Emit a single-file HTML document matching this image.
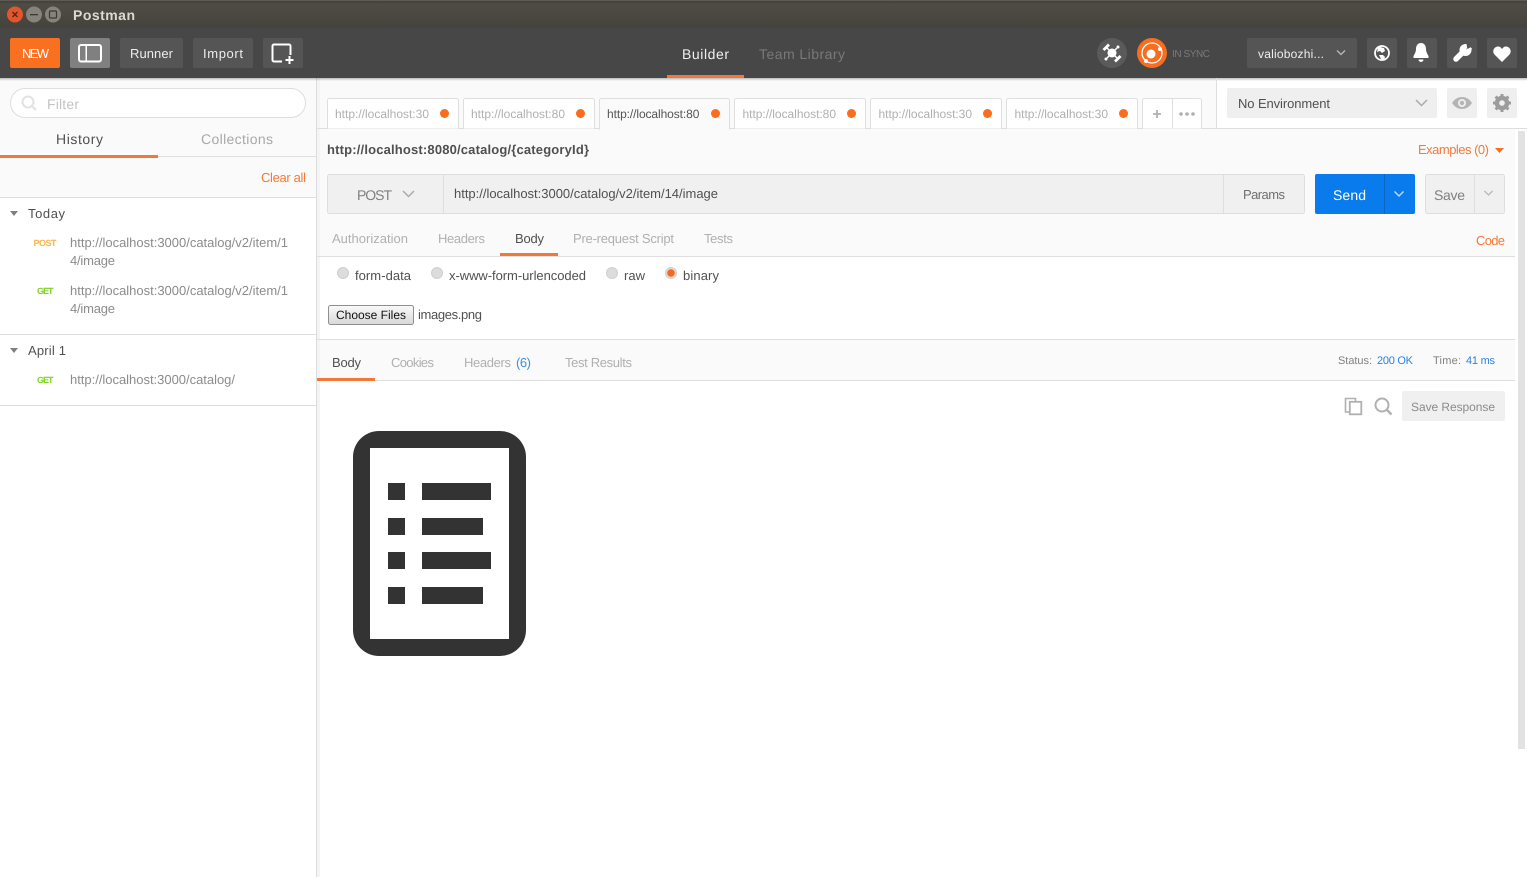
<!DOCTYPE html>
<html><head><meta charset="utf-8"><title>Postman</title>
<style>
html,body{margin:0;padding:0;background:#fff;overflow:hidden}
svg{display:block}
text{font-family:"Liberation Sans",sans-serif;font-size:13px;fill:#808080;text-rendering:geometricPrecision}
.w{fill:#fff}.o{fill:#f47a3a}.d{fill:#505050}.g{fill:#b0b0b0}.m{fill:#8c8c8c}.b{fill:#2a82e4}
.s{font-size:11px}
</style></head><body>
<svg width="1527" height="877" viewBox="0 0 1527 877" xmlns="http://www.w3.org/2000/svg">
<defs>
<linearGradient id="tb" x1="0" y1="0" x2="0" y2="1"><stop offset="0" stop-color="#3d3c37"/><stop offset=".15" stop-color="#4f4c44"/><stop offset="1" stop-color="#45433d"/></linearGradient>
<linearGradient id="sh" x1="0" y1="0" x2="0" y2="1"><stop offset="0" stop-color="#000" stop-opacity=".25"/><stop offset="1" stop-color="#000" stop-opacity="0"/></linearGradient>
<linearGradient id="btn" x1="0" y1="0" x2="0" y2="1"><stop offset="0" stop-color="#fafafa"/><stop offset="1" stop-color="#d8d8d8"/></linearGradient>
<clipPath id="c3"><rect x="607" y="100" width="92" height="26"/></clipPath>
</defs>

<!-- backgrounds -->
<rect width="1527" height="877" fill="#fff"/>
<rect x="0" y="78" width="316" height="119" fill="#fafafa"/>
<rect x="317" y="78" width="1198" height="178" fill="#fafafa"/>
<rect x="317" y="340" width="1198" height="40" fill="#fafafa"/>
<rect x="1216" y="78" width="311" height="50" fill="#fff"/>
<rect x="316" y="78" width="1" height="799" fill="#dcdcdc"/>
<rect x="317" y="78" width="3" height="799" fill="#f4f4f4"/>

<!-- title bar -->
<rect width="1527" height="28" fill="url(#tb)"/>
<rect width="1527" height="1" fill="#5d5b53"/>
<circle cx="15" cy="14.500" r="8" fill="#e2562b"/>
<path d="M12.500 12l5 5M17.500 12l-5 5" stroke="#5a2410" stroke-width="1.300"/>
<circle cx="34" cy="14.500" r="8" fill="#85837a"/>
<rect x="30" y="14" width="8" height="1.300" fill="#3b3a35"/>
<circle cx="53" cy="14.500" r="8" fill="#85837a"/>
<rect x="49.500" y="11" width="7" height="7" rx="1" fill="none" stroke="#3b3a35" stroke-width="1.200"/>
<text x="73" y="20" textLength="62" lengthAdjust="spacing" style="font-weight:700;font-size:14px;fill:#dcd9d0">Postman</text>

<!-- toolbar -->
<rect y="28" width="1527" height="50" fill="#474747"/>
<rect y="78" width="1527" height="3" fill="url(#sh)"/>
<rect x="10" y="38" width="50" height="30" rx="2" fill="#fa7021"/>
<text class="w" x="22" y="58" textLength="27" lengthAdjust="spacing" style="font-size:13px">NEW</text>
<rect x="70" y="38" width="40" height="30" rx="2" fill="#808080"/>
<rect x="79" y="45" width="22" height="16.500" rx="2" fill="none" stroke="#fff" stroke-width="2"/>
<rect x="85.500" y="45" width="1.500" height="16" fill="#fff"/>
<rect x="120" y="38" width="63" height="30" rx="2" fill="#555"/>
<text x="130" y="58" textLength="43" lengthAdjust="spacing" style="fill:#eee;font-size:13px">Runner</text>
<rect x="193" y="38" width="60" height="30" rx="2" fill="#555"/>
<text x="203" y="58" textLength="40" lengthAdjust="spacing" style="fill:#eee;font-size:13px">Import</text>
<rect x="263" y="38" width="40" height="30" rx="2" fill="#555"/>
<path d="M282 61.500h-8a1.500 1.500 0 0 1-1.500-1.500v-14a1.500 1.500 0 0 1 1.500-1.500h15a1.500 1.500 0 0 1 1.500 1.500v9" fill="none" stroke="#fff" stroke-width="2"/>
<path d="M289.500 56v8M285.500 60h8" stroke="#fff" stroke-width="2"/>

<text x="682" y="59" textLength="47" lengthAdjust="spacing" style="fill:#f0f0f0;font-size:14px">Builder</text>
<text x="759" y="59" textLength="86" lengthAdjust="spacing" style="fill:#787878;font-size:14px">Team Library</text>
<rect x="667" y="75" width="77" height="3" fill="#f4773a"/>

<circle cx="1112" cy="53" r="15" fill="#5a5a5a"/>
<circle cx="1112" cy="53" r="4.500" fill="#fff"/>
<path d="M1107 48l10 10M1117 48l-10 10" stroke="#fff" stroke-width="1.500"/>
<path d="M1102.500 49l5.500-5.500 2 2-5.500 5.500zM1114 60.500l5.500-5.500 2 2-5.500 5.500z" fill="#fff"/>
<circle cx="1118" cy="47" r="1.500" fill="#fff"/><circle cx="1106" cy="59" r="1.500" fill="#fff"/>
<circle cx="1152" cy="53" r="15" fill="#f96d1f"/>
<circle cx="1152" cy="53" r="10" fill="none" stroke="#fff" stroke-width="1.300"/>
<circle cx="1151" cy="54" r="4.500" fill="#fff"/>
<circle cx="1160" cy="49" r="2" fill="#fff"/><circle cx="1146" cy="61" r="2" fill="#fff"/>
<text x="1172" y="57" textLength="38" lengthAdjust="spacing" style="font-size:10px;fill:#7a7a7a">IN SYNC</text>
<rect x="1247" y="38" width="110" height="30" rx="2" fill="#555"/>
<text x="1258" y="58" textLength="66" lengthAdjust="spacing" style="fill:#eee;font-size:12px">valiobozhi...</text>
<path d="M1337 50.500l4 4 4-4" fill="none" stroke="#bbb" stroke-width="1.300"/>
<rect x="1367" y="38" width="30" height="30" rx="2" fill="#555"/>
<circle cx="1382" cy="53" r="7" fill="none" stroke="#fff" stroke-width="1.800"/>
<path d="M1380 47l4 1 1 3-3 2-2-2-3 1 1-4zM1379 55l4 0 2 2-1 3-3-1z" fill="#fff"/>
<rect x="1407" y="38" width="30" height="30" rx="2" fill="#555"/>
<path d="M1421 43c3.500 0 5 3 5 6 0 3 1.500 5 2.500 7v2h-15v-2c1-2 2.500-4 2.500-7 0-3 1.500-6 5-6zM1418.500 59.500h5a2.500 2.500 0 0 1-5 0z" fill="#fff"/>
<rect x="1447" y="38" width="30" height="30" rx="2" fill="#555"/>
<path d="M1456 59l8-8" stroke="#fff" stroke-width="5.500" stroke-linecap="round"/>
<circle cx="1465.500" cy="50" r="6" fill="#fff"/>
<path d="M1466.500 49.500l6.500-3.500v-4h-6.500z" fill="#555"/>
<path d="M1464.500 45.500l2-1.500 1 5.500zM1467 50.500l3.500-2 1.500-.5-1 3z" fill="#fff"/>
<rect x="1487" y="38" width="30" height="30" rx="2" fill="#555"/>
<path d="M1502 62l-7.500-7.500c-3-3.500 0-8 3.500-8 2 0 3 1 4 2.500 1-1.500 2-2.500 4-2.500 3.500 0 6.500 4.500 3.500 8z" fill="#fff"/>

<!-- sidebar -->
<rect x="10.500" y="88.500" width="295" height="29" rx="14.500" fill="#fff" stroke="#dedede"/>
<circle cx="28" cy="102" r="5.500" fill="none" stroke="#e2e2e2" stroke-width="2"/>
<path d="M32 106l4 4" stroke="#e2e2e2" stroke-width="2.200"/>
<text x="47" y="109" textLength="32" lengthAdjust="spacing" style="font-size:14px;fill:#c4c4c4">Filter</text>
<text x="56" y="144" textLength="47" lengthAdjust="spacing" style="font-size:14px;fill:#505050">History</text>
<text x="201" y="144" textLength="72" lengthAdjust="spacing" style="font-size:14px;fill:#a8a8a8">Collections</text>
<rect x="158" y="156" width="158" height="1" fill="#e0e0e0"/>
<rect x="0" y="155" width="158" height="3" fill="#f4773a"/>
<text class="o" x="261" y="182" textLength="45" lengthAdjust="spacing">Clear all</text>
<rect y="197" width="316" height="1" fill="#dedede"/>
<path d="M10 211h8l-4 5z" fill="#808080"/>
<text class="d" x="28" y="218" textLength="37" lengthAdjust="spacing">Today</text>
<text x="33.500" y="246" textLength="23" lengthAdjust="spacing" style="font-size:9px;font-weight:700;fill:#f9b54c">POST</text>
<text class="m" x="70" y="247" textLength="218" lengthAdjust="spacing">http://localhost:3000/catalog/v2/item/1</text>
<text class="m" x="70" y="265" textLength="45" lengthAdjust="spacing">4/image</text>
<text x="37" y="294" textLength="16.500" lengthAdjust="spacing" style="font-size:9px;font-weight:700;fill:#7ed321">GET</text>
<text class="m" x="70" y="295" textLength="218" lengthAdjust="spacing">http://localhost:3000/catalog/v2/item/1</text>
<text class="m" x="70" y="313" textLength="45" lengthAdjust="spacing">4/image</text>
<rect y="334" width="316" height="1" fill="#dedede"/>
<path d="M10 348h8l-4 5z" fill="#808080"/>
<text class="d" x="28" y="355" textLength="38" lengthAdjust="spacing">April 1</text>
<text x="37" y="383" textLength="16.500" lengthAdjust="spacing" style="font-size:9px;font-weight:700;fill:#7ed321">GET</text>
<text class="m" x="70" y="384" textLength="165" lengthAdjust="spacing">http://localhost:3000/catalog/</text>
<rect y="405" width="316" height="1" fill="#dedede"/>

<!-- tabs -->
<rect x="317" y="128" width="1210" height="1" fill="#dedede"/>
<rect x="1216" y="78" width="1" height="50" fill="#dedede"/>
<g fill="#fff" stroke="#dedede">
<path d="M327.500 128.500v-28a2 2 0 0 1 2-2h127a2 2 0 0 1 2 2v28"/>
<path d="M463.500 128.500v-28a2 2 0 0 1 2-2h127a2 2 0 0 1 2 2v28"/>
<path d="M734.500 128.500v-28a2 2 0 0 1 2-2h127a2 2 0 0 1 2 2v28"/>
<path d="M870.500 128.500v-28a2 2 0 0 1 2-2h127a2 2 0 0 1 2 2v28"/>
<path d="M1006.500 128.500v-28a2 2 0 0 1 2-2h127a2 2 0 0 1 2 2v28"/>
<path d="M1142.500 128.500v-28a2 2 0 0 1 2-2h55a2 2 0 0 1 2 2v28"/>
</g>
<path d="M599.500 129v-28.500a2 2 0 0 1 2-2h126a2 2 0 0 1 2 2v28.500z" fill="#fafafa" stroke="#dedede"/>
<rect x="600" y="128" width="129" height="2" fill="#fafafa"/>
<rect x="1172" y="99" width="1" height="29" fill="#dedede"/>
<text class="g" x="335" y="118" textLength="94" lengthAdjust="spacing" style="font-size:12px">http://localhost:30</text>
<text class="g" x="471" y="118" textLength="94" lengthAdjust="spacing" style="font-size:12px">http://localhost:80</text>
<g clip-path="url(#c3)"><text x="607" y="118" textLength="99" lengthAdjust="spacing" style="font-size:12px;fill:#555">http://localhost:808</text></g>
<text class="g" x="742.500" y="118" textLength="93.500" lengthAdjust="spacing" style="font-size:12px">http://localhost:80</text>
<text class="g" x="878.500" y="118" textLength="93.500" lengthAdjust="spacing" style="font-size:12px">http://localhost:30</text>
<text class="g" x="1014.500" y="118" textLength="93.500" lengthAdjust="spacing" style="font-size:12px">http://localhost:30</text>
<g fill="#f96d1f">
<circle cx="444.500" cy="113.500" r="4.500"/><circle cx="580.500" cy="113.500" r="4.500"/><circle cx="715.500" cy="113.500" r="4.500"/>
<circle cx="851.500" cy="113.500" r="4.500"/><circle cx="987.500" cy="113.500" r="4.500"/><circle cx="1123.500" cy="113.500" r="4.500"/>
</g>
<path d="M1157 110v8M1153 114h8" stroke="#b0b0b0" stroke-width="1.800"/>
<g fill="#b0b0b0"><circle cx="1181" cy="114" r="1.800"/><circle cx="1187" cy="114" r="1.800"/><circle cx="1193" cy="114" r="1.800"/></g>

<!-- environment -->
<rect x="1227" y="88" width="210" height="30" rx="2" fill="#efefef"/>
<text class="d" x="1238" y="108" textLength="92" lengthAdjust="spacing">No Environment</text>
<path d="M1416 100l5.500 5.500 5.500-5.500" fill="none" stroke="#aaa" stroke-width="1.500"/>
<rect x="1447" y="88" width="30" height="30" rx="2" fill="#efefef"/>
<path d="M1452 103c3-4.500 6.500-6 10-6s7 1.500 10 6c-3 4.500-6.500 6-10 6s-7-1.500-10-6z" fill="#b4b4b4"/>
<circle cx="1462" cy="103" r="4" fill="#efefef"/><circle cx="1462" cy="103" r="2.200" fill="#b4b4b4"/>
<rect x="1487" y="88" width="30" height="30" rx="2" fill="#efefef"/>
<circle cx="1502" cy="103" r="5.500" fill="none" stroke="#9c9c9c" stroke-width="3.500"/>
<path d="M1502 94v18M1493 103h18M1495.600 96.600l12.800 12.800M1508.400 96.600l-12.800 12.800" stroke="#9c9c9c" stroke-width="3"/>
<circle cx="1502" cy="103" r="2.800" fill="#efefef"/>

<!-- request line -->
<text x="327" y="154" textLength="262" lengthAdjust="spacing" style="font-weight:700;fill:#505050">http://localhost:8080/catalog/{categoryId}</text>
<text class="o" x="1418" y="154" textLength="71" lengthAdjust="spacing">Examples (0)</text>
<path d="M1495 148h9l-4.500 5z" fill="#f96d1f"/>
<rect x="327.500" y="174.500" width="977" height="39" rx="2" fill="#f0f0f0" stroke="#dedede"/>
<rect x="443" y="175" width="1" height="38" fill="#dedede"/>
<rect x="1223" y="175" width="1" height="38" fill="#dedede"/>
<text x="357" y="200" textLength="35" lengthAdjust="spacing" style="font-size:14px;fill:#808080">POST</text>
<path d="M403 191l5.500 5.500 5.500-5.500" fill="none" stroke="#aaa" stroke-width="1.500"/>
<text class="d" x="454" y="198" textLength="264" lengthAdjust="spacing">http://localhost:3000/catalog/v2/item/14/image</text>
<text x="1243" y="199" textLength="42" lengthAdjust="spacing" style="fill:#707070">Params</text>
<rect x="1315" y="174" width="100" height="40" rx="2" fill="#097bed"/>
<rect x="1384" y="174" width="1" height="40" fill="#0a66c2"/>
<text class="w" x="1333" y="200" textLength="33" lengthAdjust="spacing" style="font-size:14px">Send</text>
<path d="M1394.500 191.500l4.500 4.500 4.500-4.500" fill="none" stroke="#bcd9f8" stroke-width="1.500"/>
<rect x="1425.500" y="174.500" width="79" height="39" rx="2" fill="#f0f0f0" stroke="#dedede"/>
<rect x="1474" y="175" width="1" height="38" fill="#dedede"/>
<text x="1434" y="200" textLength="31" lengthAdjust="spacing" style="font-size:14px;fill:#808080">Save</text>
<path d="M1484.500 191l4 4 4-4" fill="none" stroke="#b8b8b8" stroke-width="1.300"/>

<!-- request tabs -->
<text class="g" x="332" y="243" textLength="76" lengthAdjust="spacing">Authorization</text>
<text class="g" x="438" y="243" textLength="47" lengthAdjust="spacing">Headers</text>
<text class="d" x="515" y="243" textLength="29" lengthAdjust="spacing">Body</text>
<text class="g" x="573" y="243" textLength="101" lengthAdjust="spacing">Pre-request Script</text>
<text class="g" x="704" y="243" textLength="29" lengthAdjust="spacing">Tests</text>
<text class="o" x="1476" y="245" textLength="29" lengthAdjust="spacing">Code</text>
<rect x="317" y="256" width="1198" height="1" fill="#dedede"/>
<rect x="500" y="253" width="58" height="3" fill="#f4773a"/>

<!-- radios -->
<g fill="#dcdcdc" stroke="#d0d0d0">
<circle cx="343" cy="273" r="5.500"/><circle cx="437" cy="273" r="5.500"/><circle cx="612" cy="273" r="5.500"/><circle cx="671" cy="273" r="5.500"/>
</g>
<circle cx="671" cy="273" r="3.800" fill="#f4691e"/>
<text class="d" x="355" y="280" textLength="56" lengthAdjust="spacing">form-data</text>
<text class="d" x="449" y="280" textLength="137" lengthAdjust="spacing">x-www-form-urlencoded</text>
<text class="d" x="624" y="280" textLength="21" lengthAdjust="spacing">raw</text>
<text class="d" x="683" y="280" textLength="36" lengthAdjust="spacing">binary</text>
<rect x="328.500" y="305.500" width="85" height="19" rx="2" fill="url(#btn)" stroke="#8f8f8f"/>
<text x="336" y="319" textLength="70" lengthAdjust="spacing" style="font-size:12px;fill:#111">Choose Files</text>
<text class="d" x="418" y="319" textLength="64" lengthAdjust="spacing">images.png</text>

<!-- response -->
<rect x="317" y="339" width="1198" height="1" fill="#dedede"/>
<text class="d" x="332" y="367" textLength="29" lengthAdjust="spacing">Body</text>
<text class="g" x="391" y="367" textLength="43" lengthAdjust="spacing">Cookies</text>
<text class="g" x="464" y="367" textLength="47" lengthAdjust="spacing">Headers</text>
<text x="516" y="367" textLength="15" lengthAdjust="spacing" style="fill:#3d8fe8">(6)</text>
<text class="g" x="565" y="367" textLength="67" lengthAdjust="spacing">Test Results</text>
<rect x="317" y="380" width="1198" height="1" fill="#dedede"/>
<rect x="317" y="378" width="58" height="3" fill="#f4773a"/>
<text class="s" x="1338" y="364" textLength="34" lengthAdjust="spacing" style="fill:#808080">Status:</text>
<text class="s b" x="1377" y="364" textLength="36" lengthAdjust="spacing">200 OK</text>
<text class="s" x="1433" y="364" textLength="28" lengthAdjust="spacing" style="fill:#808080">Time:</text>
<text class="s b" x="1466" y="364" textLength="29" lengthAdjust="spacing">41 ms</text>
<path d="M1349 412h-3.500v-13.500h10v3" fill="none" stroke="#b0b0b0" stroke-width="1.600"/>
<rect x="1349.800" y="401.800" width="11.500" height="12.500" fill="none" stroke="#b0b0b0" stroke-width="1.800"/>
<circle cx="1382" cy="405" r="6.500" fill="none" stroke="#b0b0b0" stroke-width="2"/>
<path d="M1387 410l4.500 4.500" stroke="#b0b0b0" stroke-width="2.400"/>
<rect x="1402" y="391" width="103" height="30" rx="2" fill="#f0f0f0"/>
<text x="1411" y="411" textLength="84" lengthAdjust="spacing" style="font-size:12px;fill:#8c8c8c">Save Response</text>

<!-- response image -->
<rect x="353" y="431" width="173" height="225" rx="26" fill="#333"/>
<rect x="370" y="448" width="139" height="191" fill="#fff"/>
<g fill="#333">
<rect x="388" y="483" width="17" height="17"/><rect x="422" y="483" width="69" height="17"/>
<rect x="388" y="518" width="17" height="17"/><rect x="422" y="518" width="61" height="17"/>
<rect x="388" y="552" width="17" height="17"/><rect x="422" y="552" width="69" height="17"/>
<rect x="388" y="587" width="17" height="17"/><rect x="422" y="587" width="61" height="17"/>
</g>

<!-- scrollbar -->
<rect x="1518" y="131" width="7" height="618" fill="#e2e2e2"/>
</svg>
</body></html>
